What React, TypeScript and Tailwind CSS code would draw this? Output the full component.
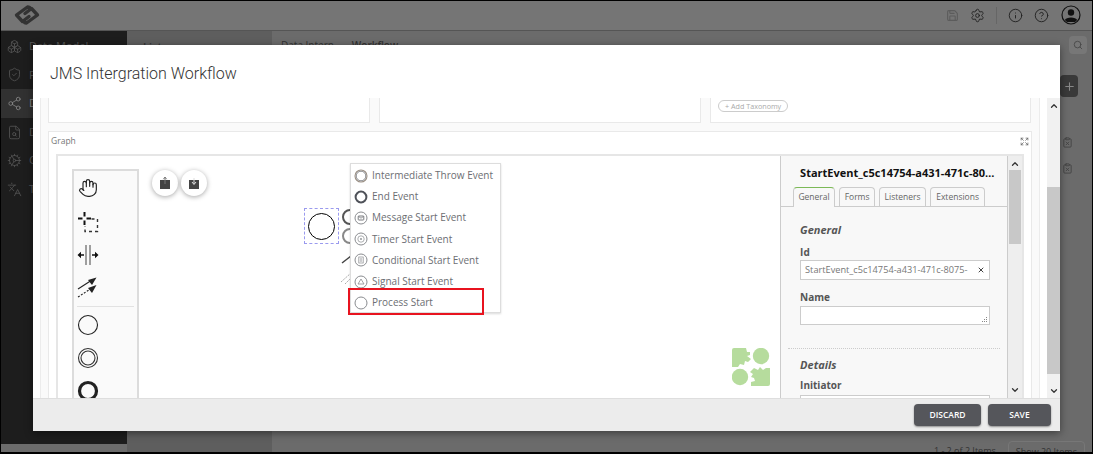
import { Hand, Settings, Info, CircleHelp, Plus, Search, ClipboardX, Save, Share2, Boxes, ShieldCheck, FileSearch, Cog, Languages, X, ChevronUp, ChevronDown, Expand } from "lucide-react";

const menuItems = [
    { label: "Intermediate Throw Event", icon: "double" },
    { label: "End Event", icon: "thick" },
    { label: "Message Start Event", icon: "message" },
    { label: "Timer Start Event", icon: "timer" },
    { label: "Conditional Start Event", icon: "conditional" },
    { label: "Signal Start Event", icon: "signal" },
    { label: "Process Start", icon: "plain" },
];

const sideItems = [
    { label: "Data Model", Icon: Boxes },
    { label: "Privacy", Icon: ShieldCheck },
    { label: "Data Integration", Icon: Share2, active: true },
    { label: "Data Quality", Icon: FileSearch },
    { label: "Configuration", Icon: Cog },
    { label: "Translations", Icon: Languages },
];

function MenuIcon({ type }: { type: string }) {
    const stroke = "#8a8c90";
    return (
        <svg width="14" height="14" viewBox="0 0 14 14" className="shrink-0">
            {type === "double" && (
                <>
                    <circle cx="7" cy="7" r="6" fill="none" stroke="#9a8f84" strokeWidth="1.1" />
                    <circle cx="7" cy="7" r="4.8" fill="none" stroke="#8a8c90" strokeWidth="1" />
                </>
            )}
            {type === "thick" && <circle cx="7" cy="7" r="5.4" fill="none" stroke="#4f5259" strokeWidth="2" />}
            {type !== "double" && type !== "thick" && (
                <circle cx="7" cy="7" r="6" fill="none" stroke={stroke} strokeWidth="1" />
            )}
            {type === "message" && (
                <>
                    <rect x="4.2" y="5" width="5.6" height="4" rx="0.6" fill="none" stroke="#6a6c71" strokeWidth="0.9" />
                    <path d="M4.4 5.4 L7 7.2 L9.6 5.4" fill="none" stroke="#6a6c71" strokeWidth="0.7" />
                </>
            )}
            {type === "timer" && (
                <>
                    <circle cx="7" cy="7" r="3.2" fill="none" stroke={stroke} strokeWidth="0.7" />
                    <circle cx="7" cy="7" r="0.9" fill={stroke} />
                </>
            )}
            {type === "conditional" && (
                <>
                    <rect x="4.8" y="4" width="4.4" height="6" fill="none" stroke={stroke} strokeWidth="0.7" />
                    <path d="M5.8 5.8 H8.2 M5.8 7 H8.2 M5.8 8.2 H8.2" stroke={stroke} strokeWidth="0.6" />
                </>
            )}
            {type === "signal" && <path d="M7 4 L10 9 H4 Z" fill="none" stroke={stroke} strokeWidth="0.8" />}
        </svg>
    );
}

function LassoIcon() {
    return (
        <svg width="22" height="22" viewBox="0 0 22 22">
            <path d="M7.5 1 V5.5 M7.5 9.5 V14 M1 7.5 H5.5 M9.5 7.5 H14" stroke="#111" strokeWidth="2" fill="none" />
            <path d="M14.5 8 H20.5 V20.5 H8 V15" stroke="#333" strokeWidth="1.4" strokeDasharray="3 3" fill="none" />
        </svg>
    );
}

function SpaceIcon() {
    return (
        <svg width="22" height="22" viewBox="0 0 22 22">
            <path d="M9 1 V21 M13 1 V21" stroke="#444" strokeWidth="1" />
            <path d="M7 11 H3 M15 11 H19" stroke="#111" strokeWidth="1.4" />
            <path d="M0.5 11 L4 7.8 V14.2 Z M21.5 11 L18 7.8 V14.2 Z" fill="#111" />
        </svg>
    );
}

function ConnectIcon() {
    return (
        <svg width="22" height="22" viewBox="0 0 22 22">
            <path d="M1 12 L15 3" stroke="#222" strokeWidth="1.1" />
            <path d="M19.5 0.5 L11 3 L15 8 Z" fill="#222" />
            <path d="M1 20 L15 11" stroke="#222" strokeWidth="1.1" strokeDasharray="2 1.5" />
            <path d="M19.5 8 L11 11 L15 16 Z" fill="#222" />
        </svg>
    );
}

function BagButton({ down }: { down?: boolean }) {
    return (
        <button className="w-[26px] h-[26px] rounded-full bg-white shadow-[0_1px_5px_rgba(0,0,0,0.35)] flex items-center justify-center">
            <svg width="12" height="14" viewBox="0 0 12 14">
                <path d="M1 4 H11 V13 H1 Z" fill="#444" />
                {down ? (
                    <path d="M6 2 V8 M4 6 L6 8.5 L8 6" stroke="#ddd" strokeWidth="1" fill="none" />
                ) : (
                    <path d="M6 8 V1.5 M4.4 3.2 L6 1 L7.6 3.2" stroke="#777" strokeWidth="1" fill="none" />
                )}
            </svg>
        </button>
    );
}

function PuzzleLogo() {
    return (
        <svg width="38" height="38" viewBox="0 0 38 38">
            <path d="M2 0 H14 L15 4 L18 4 L18 7 L15 8 L19 11 L16 14 L13 13 L12 17 L8 16 L6 19 H0 V2 A2 2 0 0 1 2 0 Z" fill="#b6dc9d" />
            <circle cx="29" cy="8" r="8.2" fill="#b6dc9d" />
            <circle cx="8" cy="29" r="8.2" fill="#b6dc9d" />
            <path d="M22 20 L26 22 L28 19 L31 22 L34 20 H38 V36 A2 2 0 0 1 36 38 H19 V34 L23 33 L22 30 L19 29 L21 26 L18 24 Z" fill="#b6dc9d" />
        </svg>
    );
}

function UserCircle() {
    return (
        <svg width="20" height="20" viewBox="0 0 20 20">
            <circle cx="10" cy="10" r="9" fill="none" stroke="#111" strokeWidth="1.2" />
            <circle cx="10" cy="7.5" r="3.2" fill="#111" />
            <path d="M3.8 15 C5 11.5 15 11.5 16.2 15 L14 17 H6 Z" fill="#111" />
        </svg>
    );
}

function Background() {
    return (
        <div className="w-full h-full flex flex-col bg-[#6c6c6c] font-['Open_Sans',sans-serif]">
            <header className="h-[31px] shrink-0 flex items-center bg-[#757575] border-b border-[#555]">
                <svg width="26" height="20" viewBox="0 0 26 20" className="ml-[14px]" fill="none" stroke="#333" strokeWidth="3.4" strokeLinejoin="round" strokeLinecap="round">
                    <path d="M15.5 2.5 L13.5 2 L2.5 10 L8.5 16.5 L15 11.5" />
                    <path d="M10.5 17.5 L12.5 18 L23.5 10 L17.5 3.5 L11 8.5" />
                </svg>
                <div className="ml-auto flex items-center text-[#222]">
                    <Save size={13} className="text-[#5c5c5c] mr-[11px]" />
                    <Settings size={15} strokeWidth={1.5} className="mr-[11px]" />
                    <div className="w-px h-[17px] bg-[#666] mr-[11px]" />
                    <Info size={15} strokeWidth={1.5} className="mr-[11px]" />
                    <CircleHelp size={15} strokeWidth={1.5} className="mr-[12px]" />
                    <div className="mr-[12px]"><UserCircle /></div>
                </div>
            </header>
            <div className="flex-1 flex min-h-0">
                <aside className="w-[127px] shrink-0 bg-[#1d1d1d] pt-[1px] text-[#555] mb-[10px]">
                    {sideItems.map(({ label, Icon, active }) => (
                        <div key={label} className={`h-[28.6px] flex items-center gap-[7px] pl-[7px] text-[11px] ${active ? "bg-[#313131] text-[#888]" : ""}`}>
                            <Icon size={15} strokeWidth={1.3} />
                            <span>{label}</span>
                        </div>
                    ))}
                </aside>
                <div className="w-[145px] shrink-0 bg-[#5e5e5e] pt-[8px] pl-[16px] text-[11px] text-[#333] font-semibold">
                    List
                </div>
                <div className="flex-1 bg-[#6b6b6b] flex flex-col pl-[9px] pr-[6px] text-[#333]">
                    <div className="flex items-center justify-between h-[28px]">
                        <div className="text-[10px] flex gap-[18px]">
                            <span>Data Intern</span>
                            <span className="font-semibold">Workflow</span>
                        </div>
                        <div className="w-[18px] h-[18px] rounded-sm bg-[#777] flex items-center justify-center">
                            <Search size={10} className="text-[#444]" />
                        </div>
                    </div>
                    <div className="flex justify-end mt-[16px] mr-[9px]">
                        <div className="w-[18px] h-[22px] rounded-sm bg-[#393939] flex items-center justify-center">
                            <Plus size={13} className="text-[#888]" />
                        </div>
                    </div>
                    <div className="flex-1 mt-[32px] ml-auto w-[26px] pl-[1px]">
                        <div className="h-[26px] flex items-center"><ClipboardX size={11} className="text-[#444]" /></div>
                        <div className="h-[26px] flex items-center"><ClipboardX size={11} className="text-[#444]" /></div>
                    </div>
                    <div className="flex justify-end items-start gap-[12px] h-[13px] text-[9px]">
                        <span className="pt-[3px]">1 - 2 of 2 Items</span>
                        <span className="border border-[#777] rounded-t-sm px-[7px] pt-[3px] h-[14px] mr-[2px]">Show 20 Items</span>
                    </div>
                </div>
            </div>
        </div>
    );
}

function GraphCanvas() {
    return (
        <div className="relative flex-1 mx-[7px] border-2 border-b-0 border-[#e6e6e6] bg-white flex min-h-0 overflow-hidden">
            {/* palette */}
            <div className="ml-[14px] mt-[13px] w-[67px] h-[240px] bg-[#fafafa] border-2 border-[#dcdcdc] flex flex-col items-start pl-[3px] shrink-0">
                <div className="h-[34px] flex items-center justify-center w-[22px]">
                    <Hand size={20} strokeWidth={1.4} className="text-[#222] shrink-0" />
                </div>
                <div className="h-[33px] flex items-center justify-center"><LassoIcon /></div>
                <div className="h-[33px] flex items-center justify-center"><SpaceIcon /></div>
                <div className="h-[33px] flex items-center justify-center"><ConnectIcon /></div>
                <div className="w-[57px] h-px bg-[#e2e2e2] mt-[2px] shrink-0" />
                <div className="mt-[7px] flex flex-col items-center gap-[11px]">
                    <svg width="22" height="22"><circle cx="11" cy="11" r="9.5" fill="none" stroke="#222" strokeWidth="1.1" /></svg>
                    <svg width="22" height="22">
                        <circle cx="11" cy="11" r="9.5" fill="none" stroke="#333" strokeWidth="1.1" />
                        <circle cx="11" cy="11" r="7" fill="none" stroke="#333" strokeWidth="1.1" />
                    </svg>
                    <svg width="22" height="22"><circle cx="11" cy="11" r="8.5" fill="none" stroke="#222" strokeWidth="3.2" /></svg>
                </div>
            </div>

            <div className="relative flex-1 min-w-0">
                {/* import / export */}
                <div className="absolute left-[13px] top-[14px] flex gap-[3px]">
                    <BagButton />
                    <BagButton down />
                </div>

                {/* selected start event */}
                <div className="absolute left-[165px] top-[52px] w-[35px] h-[36px] border border-dashed border-[#9a9aee] flex items-center justify-center">
                    <div className="w-[27px] h-[27px] rounded-full border-[1.5px] border-black" />
                </div>
                <svg width="12" height="80" className="absolute left-[201px] top-[50px]">
                    <circle cx="10" cy="11" r="7" fill="none" stroke="#555" strokeWidth="2" />
                    <circle cx="10" cy="30" r="7" fill="none" stroke="#888" strokeWidth="2" />
                    <path d="M2 57 L11 50" stroke="#444" strokeWidth="1.5" />
                    <path d="M1 76 L11 67 M5 78 L11 72" stroke="#aaa" strokeWidth="1" strokeDasharray="2 1" />
                </svg>

                {/* replace menu */}
                <div className="absolute left-[211px] top-[7px] w-[151px] h-[150px] bg-white border border-[#ddd] shadow-[0_1px_2px_rgba(0,0,0,0.15)] pt-[1px] font-['Open_Sans',sans-serif] text-[10px] text-[#6c6e73]">
                    {menuItems.map((item) => (
                        <div key={item.label} className="h-[21.2px] flex items-center pl-[3px] gap-[4px]">
                            <MenuIcon type={item.icon} />
                            <span className="whitespace-nowrap">{item.label}</span>
                        </div>
                    ))}
                </div>
                <div className="absolute left-[209px] top-[132px] w-[136px] h-[27px] border-2 border-[#e8131f]" />

                <div className="absolute right-[10px] top-[192px]"><PuzzleLogo /></div>
            </div>

            {/* properties panel */}
            <div className="w-[242px] shrink-0 flex">
                <div className="w-[228px] bg-[#f8f8f8] border-l border-r border-[#ccc] flex flex-col font-['Open_Sans',sans-serif] text-[#555] overflow-hidden">
                    <div className="shrink-0 pl-[19px] pt-[9px] pr-[12px] text-[11px] leading-[16px] font-bold text-[#111] truncate">StartEvent_c5c14754-a431-471c-8075-4b0a</div>
                    <div className="shrink-0 mt-[6px] h-[20px] flex gap-[4px] pl-[12px] border-b border-[#ccc] text-[8.5px] text-[#666]">
                        <div className="w-[42px] h-[20px] flex items-center justify-center bg-[#f8f8f8] border border-b-0 border-[#ccc] border-t-[#7cb957] rounded-t-sm">General</div>
                        <div className="w-[36px] h-[19px] flex items-center justify-center border border-b-0 border-[#ccc] rounded-t-sm">Forms</div>
                        <div className="w-[47px] h-[19px] flex items-center justify-center border border-b-0 border-[#ccc] rounded-t-sm">Listeners</div>
                        <div className="w-[55px] h-[19px] flex items-center justify-center border border-b-0 border-[#ccc] rounded-t-sm">Extensions</div>
                    </div>
                    <div className="shrink-0 pl-[19px] pt-[14px]">
                        <div className="text-[11px] font-bold italic leading-[17px]">General</div>
                        <div className="mt-[7px] text-[10px] font-bold leading-[14px]">Id</div>
                        <div className="mt-[1px] w-[190px] h-[20px] bg-white border border-[#ccc] flex items-center pl-[4px] pr-[4px] text-[9.2px] text-[#777]">
                            <span className="flex-1 overflow-hidden whitespace-nowrap">StartEvent_c5c14754-a431-471c-8075-</span>
                            <X size={8} strokeWidth={3} className="ml-[6px] shrink-0 text-[#444]" />
                        </div>
                        <div className="mt-[10px] text-[10px] font-bold leading-[14px]">Name</div>
                        <div className="relative mt-[2px] w-[190px] h-[19px] bg-white border border-[#ccc]">
                            <svg width="7" height="7" className="absolute right-[1px] bottom-[1px]">
                                <path d="M5 1h1v1h-1z M3 3h1v1h-1z M5 3h1v1h-1z M1 5h1v1h-1z M3 5h1v1h-1z M5 5h1v1h-1z" fill="#888" />
                            </svg>
                        </div>
                    </div>
                    <div className="shrink-0 mx-[7px] mt-[23px] border-t border-dotted border-[#ccc]" />
                    <div className="shrink-0 pl-[19px] pt-[7px]">
                        <div className="text-[11px] font-bold italic leading-[17px]">Details</div>
                        <div className="mt-[5px] text-[10px] font-bold leading-[14px]">Initiator</div>
                        <div className="mt-[3px] w-[190px] h-[20px] bg-white border border-[#ccc]" />
                    </div>
                </div>
                <div className="w-[14px] bg-[#eeeeee] flex flex-col items-center pt-[1px] relative">
                    <ChevronUp size={10} strokeWidth={3} className="text-[#333] mt-[2px]" />
                    <div className="w-[12px] h-[74px] bg-[#c8c8c8] mt-[1px]" />
                    <ChevronDown size={10} strokeWidth={3} className="absolute top-[229px] text-[#333]" />
                </div>
            </div>
        </div>
    );
}

export default function App() {
    return (
        <div className="relative w-[1093px] h-[454px] overflow-hidden">
            <Background />
            <div className="absolute inset-0 border border-black pointer-events-none border-b-2" />

            <div className="absolute left-[33px] top-[45px] w-[1027px] h-[386px] bg-white flex flex-col shadow-[0_2px_8px_rgba(0,0,0,0.45)] z-10">
                <div className="h-[53px] shrink-0 flex items-center pl-[17px] pt-[5px] font-['Roboto',sans-serif] font-light text-[16px] text-[#333]">
                    JMS Intergration Workflow
                </div>

                <div className="flex-1 flex min-h-0">
                    <div className="w-[1006px] ml-[7px] bg-[#fafafa] border-x border-[#ececec] px-[7px] flex flex-col gap-[8px] overflow-hidden">
                        <div className="h-[25px] shrink-0 flex gap-[9px]">
                            <div className="w-[322px] bg-white border-x border-b border-[#e9e9e9]" />
                            <div className="w-[322px] bg-white border-x border-b border-[#e9e9e9]" />
                            <div className="w-[321px] bg-white border-x border-b border-[#e9e9e9] flex items-start pl-[7px] pt-[2px]">
                                <span className="h-[12px] px-[6px] rounded-full border border-[#ccc] text-[7.2px] leading-[10px] text-[#aaa] font-['Open_Sans',sans-serif]">+ Add Taxonomy</span>
                            </div>
                        </div>
                        <div className="flex-1 min-h-0 bg-white border border-b-0 border-[#e9e9e9] flex flex-col">
                            <div className="h-[18px] mb-[4px] shrink-0 flex items-center justify-between pl-[2px] pr-[2px] font-['Open_Sans',sans-serif] text-[8.5px] text-[#777]">
                                <span>Graph</span>
                                <Expand size={9} className="text-[#666]" />
                            </div>
                            <GraphCanvas />
                        </div>
                    </div>
                    <div className="ml-[7px] w-[13px] bg-[#f1f1f1] flex flex-col items-center relative">
                        <ChevronUp size={10} strokeWidth={3} className="text-[#333] mt-[3px]" />
                        <div className="absolute top-[89px] w-[13px] h-[187px] bg-[#c8c8c8]" />
                        <ChevronDown size={10} strokeWidth={3} className="absolute bottom-[2px] text-[#333]" />
                    </div>
                </div>

                <div className="h-[33px] shrink-0 bg-[#ececec] border-t border-[#dedede] flex items-center justify-end gap-[7px] pr-[9px] font-['Open_Sans',sans-serif]">
                    <button className="w-[67px] h-[22px] rounded-sm bg-[#55565b] text-white text-[8.5px] font-semibold shadow-[0_1px_2px_rgba(0,0,0,0.4)]">DISCARD</button>
                    <button className="w-[63px] h-[22px] rounded-sm bg-[#55565b] text-white text-[8.5px] font-semibold shadow-[0_1px_2px_rgba(0,0,0,0.4)]">SAVE</button>
                </div>
            </div>
        </div>
    );
}
